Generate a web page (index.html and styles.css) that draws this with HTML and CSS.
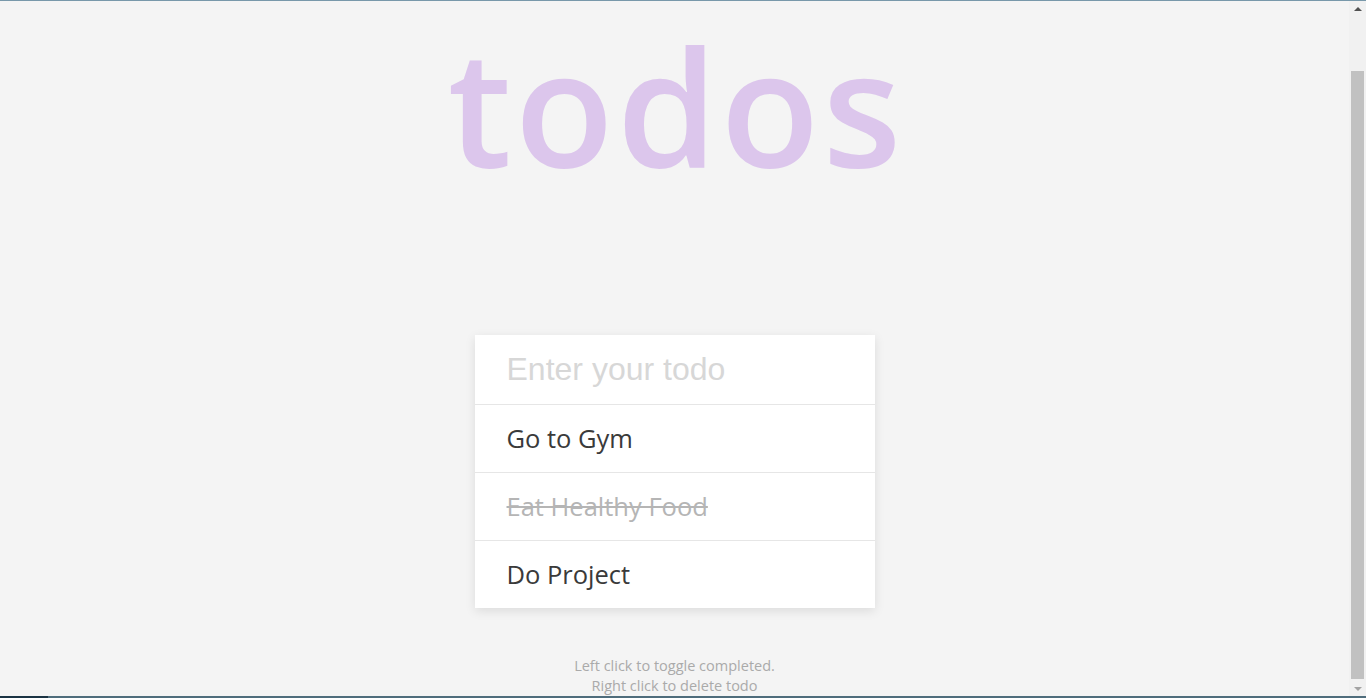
FILE: index.html
```html
<!DOCTYPE html>
<html lang="en">
<head>
<meta charset="utf-8">
<title>todos</title>
<link rel="stylesheet" href="styles.css">
</head>
<body>
  <div class="topline"></div>
  <div class="window">
    <main class="page">
      <h1 class="title">todos</h1>
      <section class="card">
        <input class="new-todo" type="text" placeholder="Enter your todo">
        <ul class="todo-list">
          <li class="todo">Go to Gym</li>
          <li class="todo completed">Eat Healthy Food</li>
          <li class="todo">Do Project</li>
        </ul>
      </section>
      <p class="hint">Left click to toggle completed.<br>Right click to delete todo</p>
    </main>
    <div class="scrollbar">
      <div class="arrow arrow-up"></div>
      <div class="track"><div class="thumb"></div></div>
      <div class="arrow arrow-down"></div>
    </div>
  </div>
  <div class="bottomline">
    <div class="seg seg-dark"></div>
    <div class="seg seg-light"></div>
  </div>
</body>
</html>
```

FILE: styles.css
```css
html, body {
  margin: 0;
  padding: 0;
  height: 100%;
}

body {
  display: flex;
  flex-direction: column;
  height: 698px;
  overflow: hidden;
  background: #f4f4f4;
  font-family: "Open Sans", "Liberation Sans", sans-serif;
}

.topline {
  height: 1px;
  background: #7898aa;
  flex: none;
}

.window {
  flex: 1;
  display: flex;
  min-height: 0;
}

.page {
  flex: 1;
  display: flex;
  flex-direction: column;
  align-items: center;
  padding-top: 0;
}

.title {
  margin: -7px 0 0;
  padding-left: 3px;
  font-size: 162px;
  line-height: 220px;
  height: 220px;
  font-weight: 600;
  color: #dcc6ec;
  letter-spacing: 3px;
}

.card {
  width: 400px;
  margin-top: 121px;
  background: #fff;
  box-shadow: 0 3px 10px rgba(0, 0, 0, 0.1);
}

.new-todo {
  display: block;
  box-sizing: border-box;
  width: 100%;
  height: 70px;
  margin: 0;
  padding: 0 32px;
  border: 0;
  border-bottom: 1px solid #e6e6e6;
  outline: none;
  background: #fff;
  font-family: "Liberation Sans", Arial, sans-serif;
  font-size: 32px;
  color: #333;
}

.new-todo::placeholder {
  color: #d7d7d7;
}

.todo-list {
  list-style: none;
  margin: 0;
  padding: 0;
}

.todo {
  display: flex;
  align-items: center;
  height: 65px;
  padding: 0 32px 2px;
  font-size: 25.5px;
  color: #3a3a3a;
}

.todo + .todo {
  border-top: 1px solid #e6e6e6;
}

.todo.completed {
  color: #b5b5b5;
  text-decoration: line-through;
}

.hint {
  margin: 48px 0 0;
  font-size: 14.5px;
  line-height: 20px;
  color: #aaa;
  text-align: center;
}

.scrollbar {
  width: 17px;
  flex: none;
  display: flex;
  flex-direction: column;
  background: #f1f1f1;
}

.arrow {
  height: 17px;
  flex: none;
  display: flex;
  align-items: center;
  justify-content: center;
}

.arrow::before {
  content: "";
  width: 0;
  height: 0;
  border-left: 4px solid transparent;
  border-right: 4px solid transparent;
}

.arrow-up::before {
  border-bottom: 4px solid #505050;
  margin-top: -2px;
}

.arrow-down::before {
  border-top: 4px solid #a3a3a3;
  margin-top: 2px;
}

.track {
  flex: 1;
  display: flex;
  flex-direction: column;
  justify-content: flex-end;
  padding: 0 2px;
}

.thumb {
  height: 608px;
  background: #c1c1c1;
}

.bottomline {
  height: 2px;
  flex: none;
  display: flex;
}

.seg-dark {
  width: 48px;
  background: #1b3444;
}

.seg-light {
  flex: 1;
  background: #4f6d7c;
}
```
